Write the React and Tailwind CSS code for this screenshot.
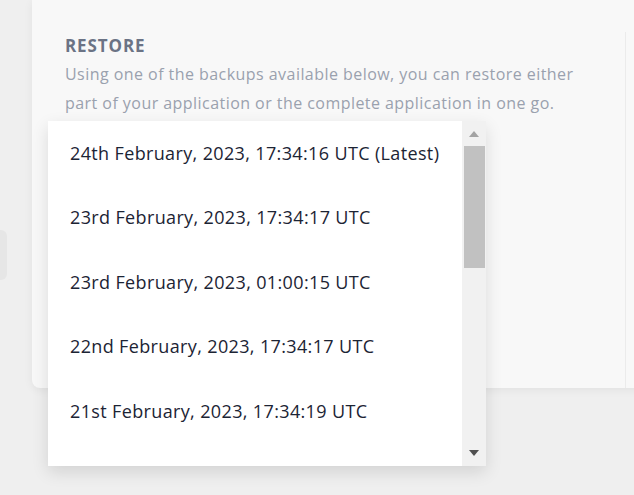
const BACKUPS = [
  '24th February, 2023, 17:34:16 UTC (Latest)',
  '23rd February, 2023, 17:34:17 UTC',
  '23rd February, 2023, 01:00:15 UTC',
  '22nd February, 2023, 17:34:17 UTC',
  '21st February, 2023, 17:34:19 UTC',
];

export default function App() {
  return (
    <div
      className="relative w-[634px] h-[495px] overflow-hidden bg-[#efefef] flex"
      style={{ fontFamily: '"Open Sans", Lato, sans-serif' }}
    >
      {/* side rail */}
      <div className="w-[32px] flex-shrink-0 pt-[230px]">
        <div className="w-[7px] h-[50px] rounded-r-md bg-[#e6e6e6]" />
      </div>

      {/* Card */}
      <div className="flex-1 h-[388px] -mr-4 bg-[#f8f8f8] rounded-bl-lg shadow-[0_2px_10px_rgba(0,0,0,0.06)] pt-[32px]">
        <div className="w-[594px] h-full border-r border-[#ebebeb] pl-[33px] pt-[3px]">
          <h3 className="text-[17px] leading-[22px] font-bold tracking-[0.9px] text-[#6b7385]">RESTORE</h3>
          <p className="mt-[3px] w-[540px] text-[16px] leading-[29px] tracking-[0.45px] text-[#9aa1ae]">
            Using one of the backups available below, you can restore either part of your application or the complete
            application in one go.
          </p>
        </div>
      </div>

      {/* Backup list dropdown */}
      <div className="absolute left-[48px] top-[121px] w-[438px] h-[345px] bg-white flex shadow-[0_6px_16px_rgba(0,0,0,0.12)]">
        <div className="flex-1 overflow-hidden">
          {BACKUPS.map((b) => (
            <div key={b} className="h-[64.5px] flex items-center pl-[22px] text-[18px] tracking-[0.36px] text-[#1c2434]">
              {b}
            </div>
          ))}
        </div>
        <div className="w-[24px] bg-[#f1f1f1] flex flex-col items-center">
          <div className="h-[25px] flex items-center justify-center">
            <svg width="10" height="6" viewBox="0 0 10 6">
              <path d="M0 6L5 0l5 6z" fill="#a3a3a3" />
            </svg>
          </div>
          <div className="w-[21px] h-[122px] bg-[#c1c1c1] ml-[1px]" />
          <div className="flex-1" />
          <div className="h-[25px] flex items-center justify-center pb-[2px]">
            <svg width="10" height="6" viewBox="0 0 10 6">
              <path d="M0 0l5 6 5-6z" fill="#505050" />
            </svg>
          </div>
        </div>
      </div>
    </div>
  );
}
